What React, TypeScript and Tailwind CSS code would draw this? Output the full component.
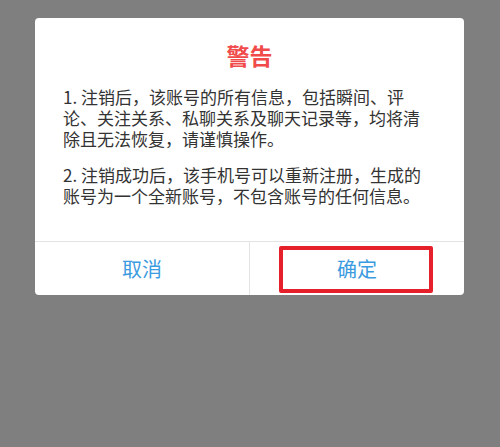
export default function App() {
  return (
    <div
      className="w-[500px] h-[447px] bg-[#7f7f7f] pt-[18px] pl-[35px]"
      style={{ fontFamily: '"Noto Sans CJK SC", "Noto Sans", sans-serif' }}
    >
      <div className="w-[429px] h-[277px] bg-white rounded-[4px] flex flex-col overflow-hidden">
        <div className="flex-1 px-[28px] pt-[22px]">
          <h2 className="text-center text-[23px] leading-[30px] font-bold text-[#f04a4a]">警告</h2>
          <p className="mt-[16px] text-[17px] leading-[21px] text-[#333333]">
            1. 注销后，该账号的所有信息，包括瞬间、评论、关注关系、私聊关系及聊天记录等，均将清除且无法恢复，请谨慎操作。
          </p>
          <p className="mt-[15px] text-[17px] leading-[21px] text-[#333333]">
            2. 注销成功后，该手机号可以重新注册，生成的账号为一个全新账号，不包含账号的任何信息。
          </p>
        </div>
        <div className="h-[54px] border-t border-[#e3e3e3] flex">
          <button className="flex-1 flex items-center justify-center text-[20px] text-[#3b9be0] border-r border-[#e3e3e3]">
            取消
          </button>
          <button className="relative flex-1 flex items-center justify-center text-[20px] text-[#3b9be0]">
            确定
            <span className="absolute left-[29px] right-[31px] top-[4px] bottom-[2px] border-[4px] border-[#e5202a] rounded-[2px]" />
          </button>
        </div>
      </div>
    </div>
  );
}
